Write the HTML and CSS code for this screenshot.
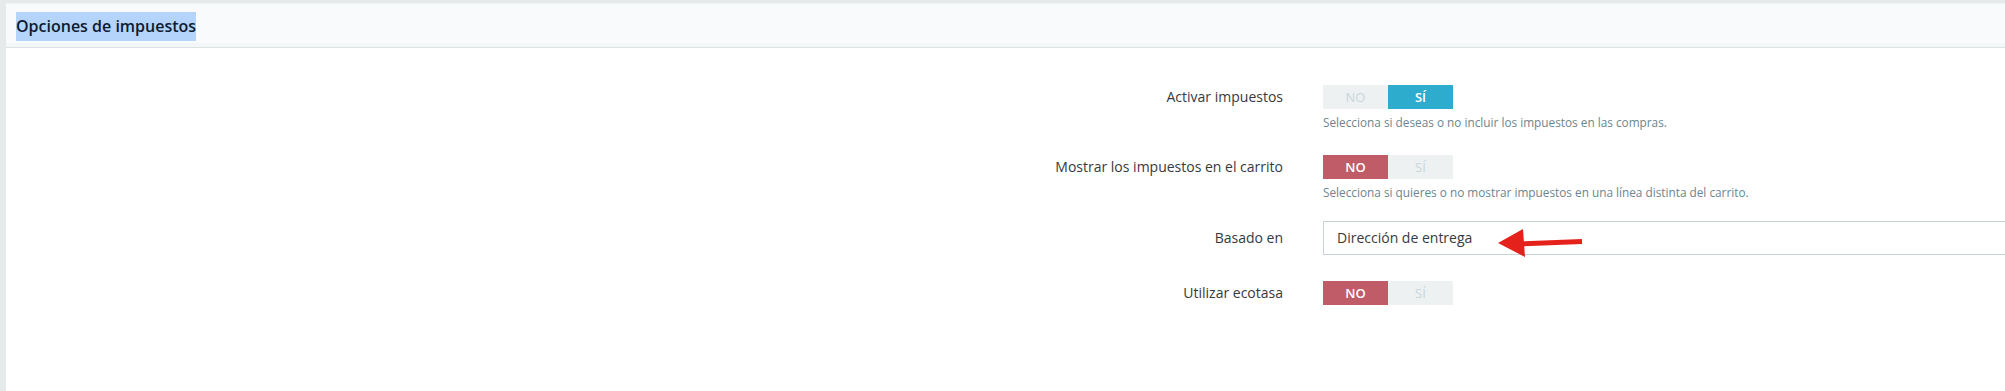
FILE: index.html
```html
<!DOCTYPE html>
<html lang="es">
<head>
    <meta charset="UTF-8">
    <title>Opciones de impuestos</title>
    <link rel="stylesheet" href="styles.css">
</head>
<body>

    <!-- Tax options panel -->
    <div class="panel">
        <div class="panel-heading">
            <h3><span class="selected">Opciones de impuestos</span></h3>
        </div>

        <div class="panel-body">
            <div class="form-row row-switch">
                <label class="form-label">Activar impuestos</label>
                <div class="form-control-wrap">
                    <div class="switch">
                        <span class="switch-off">NO</span>
                        <span class="switch-on active-yes">SÍ</span>
                    </div>
                    <p class="help">Selecciona si deseas o no incluir los impuestos en las compras.</p>
                </div>
            </div>

            <div class="form-row row-switch-2">
                <label class="form-label">Mostrar los impuestos en el carrito</label>
                <div class="form-control-wrap">
                    <div class="switch">
                        <span class="switch-off active-no">NO</span>
                        <span class="switch-on">SÍ</span>
                    </div>
                    <p class="help">Selecciona si quieres o no mostrar impuestos en una línea distinta del carrito.</p>
                </div>
            </div>

            <div class="form-row row-select">
                <label class="form-label">Basado en</label>
                <div class="form-control-wrap">
                    <div class="select-box">
                        Dirección de entrega
                        <!-- red arrow pointing at the value -->
                        <svg class="arrow" width="90" height="30" viewBox="0 0 90 30">
                            <polygon points="0,14 25,0 27,28" fill="#e5211c"/>
                            <line x1="22" y1="15" x2="84" y2="12.5" stroke="#e5211c" stroke-width="5"/>
                        </svg>
                    </div>
                </div>
            </div>

            <div class="form-row">
                <label class="form-label">Utilizar ecotasa</label>
                <div class="form-control-wrap">
                    <div class="switch">
                        <span class="switch-off active-no">NO</span>
                        <span class="switch-on">SÍ</span>
                    </div>
                </div>
            </div>
        </div>
    </div>

</body>
</html>
```

FILE: styles.css
```css
/* General Styles */
body {
    margin: 0;
    padding: 3px 0 0 6px;
    background: #e7eaeb;
    font-family: 'Open Sans', 'Noto Sans', sans-serif;
    color: #363a41;
    height: 391px;
    box-sizing: border-box;
    overflow: hidden;
}

/* Panel */
.panel {
    background: #ffffff;
    width: 2100px;
    height: 500px;
}

.panel-heading {
    height: 43px;
    background: #f8fafb;
    border-top: 1px solid #f1f5f6;
    border-bottom: 1px solid #dde2e3;
    box-shadow: inset 0 -4px 0 #f3f7f8;
    display: flex;
    align-items: center;
    padding-left: 10px;
}

.panel-heading h3 {
    margin: 0;
    font-size: 16px;
    font-weight: 600;
    color: #0d1b30;
}

.panel-heading .selected {
    background: #b4d4fb;
    padding: 3px 0 4px;
}

.panel-body {
    padding-top: 37px;
}

/* Form rows */
.form-row {
    display: grid;
    grid-template-columns: 1277px auto;
    column-gap: 40px;
    align-items: start;
}

.row-switch {
    margin-bottom: 24px;
}

.row-switch-2 {
    margin-bottom: 20px;
}

.row-select {
    margin-bottom: 26px;
}

.form-label {
    text-align: right;
    font-size: 14px;
    line-height: 24px;
    color: #363a41;
}

.row-select .form-label {
    line-height: 34px;
}

/* Switches */
.switch {
    display: flex;
    width: 130px;
    height: 24px;
    background: #eef1f2;
}

.switch span {
    flex: 1;
    text-align: center;
    font-size: 13px;
    line-height: 24px;
    color: #c8d6da;
}

.switch .active-yes {
    background: #2eacce;
    color: #ffffff;
    font-weight: 600;
}

.switch .active-no {
    background: #c05c67;
    color: #ffffff;
    font-weight: 600;
}

.help {
    margin: 5px 0 0;
    font-size: 11.8px;
    line-height: 17px;
    color: #6c868e;
}

/* Select box */
.select-box {
    position: relative;
    width: 900px;
    height: 34px;
    box-sizing: border-box;
    border: 1px solid #c7d2d5;
    padding: 0 13px;
    font-size: 14px;
    line-height: 32px;
    color: #363a41;
}

.arrow {
    position: absolute;
    left: 174px;
    top: 7px;
}
```
